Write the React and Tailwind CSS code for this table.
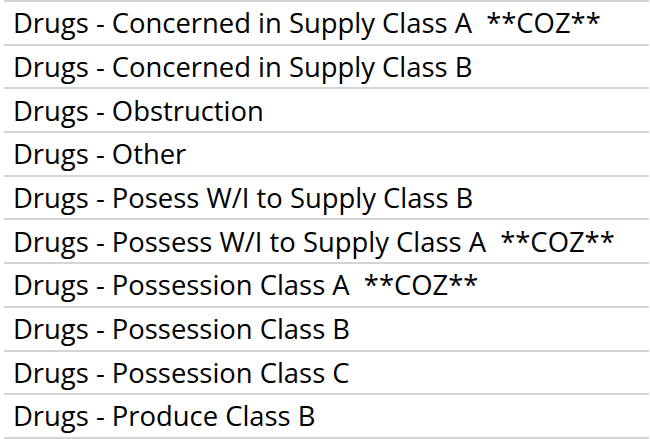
export default function App() {
  const rows = [
    "Drugs - Concerned in Supply Class A  **COZ**",
    "Drugs - Concerned in Supply Class B",
    "Drugs - Obstruction",
    "Drugs - Other",
    "Drugs - Posess W/I to Supply Class B",
    "Drugs - Possess W/I to Supply Class A  **COZ**",
    "Drugs - Possession Class A  **COZ**",
    "Drugs - Possession Class B",
    "Drugs - Possession Class C",
    "Drugs - Produce Class B",
  ];
  return (
    <div className="w-[650px] h-[439px] bg-white overflow-hidden">
      <div className="ml-[4px] w-[645px] border-b-2 border-[#d4d4d4]">
        {rows.map((r, i) => (
          <div
            key={i}
            className="h-[43.7px] border-t-2 border-[#d4d4d4] flex items-center pl-[9px] text-[27.4px] text-black whitespace-pre"
            style={{ fontFamily: "'Open Sans', sans-serif" }}
          >
            {r}
          </div>
        ))}
      </div>
    </div>
  );
}
